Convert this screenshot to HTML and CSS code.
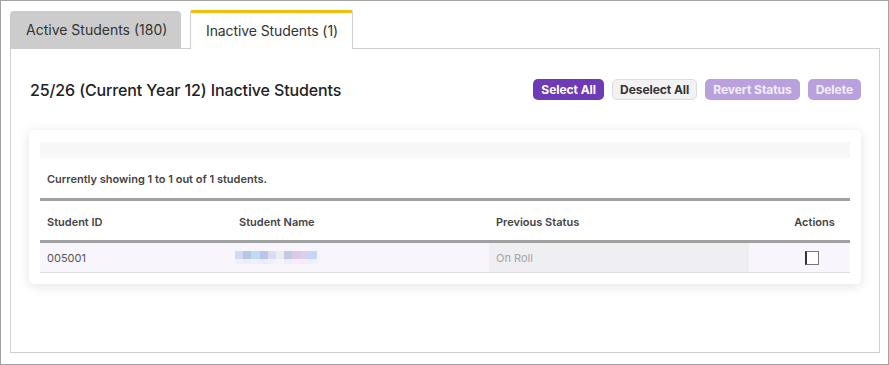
FILE: index.html
```html
<!DOCTYPE html>
<html>
<head>
<meta charset="utf-8">
<link rel="stylesheet" href="styles.css">
</head>
<body>
<div class="frame">
  <div class="tabs">
    <div class="tab">Active Students (180)</div>
    <div class="tab selected">Inactive Students (1)</div>
  </div>
  <div class="panel">
    <div class="header">
      <h1 class="title">25/26 (Current Year 12) Inactive Students</h1>
      <div class="actions">
        <button class="btn primary">Select All</button>
        <button class="btn light">Deselect All</button>
        <button class="btn disabled">Revert Status</button>
        <button class="btn disabled">Delete</button>
      </div>
    </div>
    <div class="card">
      <div class="filterbar"></div>
      <div class="count">Currently showing 1 to 1 out of 1 students.</div>
      <table class="grid">
        <colgroup>
          <col class="c1"><col class="c2"><col class="c3"><col class="c4">
        </colgroup>
        <thead>
          <tr>
            <th>Student ID</th>
            <th>Student Name</th>
            <th>Previous Status</th>
            <th class="act">Actions</th>
          </tr>
        </thead>
        <tbody>
          <tr>
            <td>005001</td>
            <td>
              <div class="blur">
                <div class="px-row top">
                  <span style="background:#d2daf2"></span><span style="background:#b9c4e8"></span><span style="background:#bddcf3"></span><span style="background:#b9c4e6"></span><span style="background:#dcdcf0"></span><span style="background:#ebebf6"></span><span style="background:#c5c8e4"></span><span style="background:#dcc9e5"></span><span style="background:#d6d0ee"></span><span style="background:#c6d5f4"></span>
                </div>
                <div class="px-row bottom">
                  <span style="background:#eef0fa"></span><span style="background:#eaeef9"></span><span style="background:#edf2fa"></span><span style="background:#eaedf8"></span><span style="background:#f1eff9"></span><span style="background:#f5f3fb"></span><span style="background:#eeedf8"></span><span style="background:#f3eef8"></span><span style="background:#f1eefa"></span><span style="background:#eef0fa"></span>
                </div>
              </div>
            </td>
            <td class="status">On Roll</td>
            <td class="act"><span class="check"></span></td>
          </tr>
        </tbody>
      </table>
    </div>
  </div>
</div>
</body>
</html>
```

FILE: styles.css
```css
* { box-sizing: border-box; }
html, body { margin: 0; padding: 0; background: #fff; }
body {
  font-family: Inter, "Noto Sans", "Liberation Sans", sans-serif;
  color: #333;
  width: 889px;
  height: 365px;
  overflow: hidden;
}
.frame {
  width: 889px;
  height: 365px;
  border: 1px solid #a3a3a3;
  padding: 9px 8px 11px 9px;
  display: flex;
  flex-direction: column;
}
.tabs {
  display: flex;
  align-items: flex-end;
  gap: 9px;
  height: 39px;
  margin-bottom: -1px;
  position: relative;
  z-index: 1;
}
.tab {
  height: 38px;
  padding: 0 16px 0 16px;
  width: 171px;
  background: #cccccc;
  border-radius: 4px 4px 0 0;
  font-size: 14px;
  line-height: 38px;
  color: #333;
  white-space: nowrap;
}
.tab.selected {
  width: 163px;
  height: 39px;
  background: #fff;
  border: 1px solid #cfcfcf;
  border-top: 3px solid #f5bd0b;
  border-bottom: none;
  border-radius: 2px 2px 0 0;
  line-height: 36px;
  padding-left: 15px;
  letter-spacing: -0.1px;
}
.panel {
  flex: 1;
  border: 1px solid #cfcfcf;
  padding: 0 18px 0 18px;
}
.header {
  display: flex;
  align-items: center;
  justify-content: space-between;
  height: 80px;
  padding: 0 0 0 1px;
}
.title {
  margin: 0;
  padding-top: 1px;
  font-size: 16px;
  font-weight: 500;
  color: #222;
  letter-spacing: -0.12px;
}
.actions { display: flex; gap: 8px; }
.btn {
  font-family: inherit;
  font-size: 12px;
  font-weight: 700;
  height: 21px;
  padding: 0 7px;
  border-radius: 5px;
  border: 1px solid transparent;
  line-height: 19px;
  white-space: nowrap;
  letter-spacing: -0.05px;
  cursor: pointer;
}
.btn.primary { background: #6d3bb6; color: #fff; }
.btn.light { background: #f2f2f4; color: #333; border-color: #dcdce0; }
.btn.disabled { background: #b9a1de; color: #f3eefb; }

.card {
  background: #fff;
  border-radius: 5px;
  box-shadow: 0 2px 12px rgba(0,0,0,0.12);
  padding: 12px 11px 11px 11px;
  margin-top: 1px;
}
.filterbar { height: 16px; background: #f7f7f7; }
.count {
  font-size: 11px;
  font-weight: 600;
  color: #444;
  padding: 0 7px;
  height: 40px;
  line-height: 43px;
}
.grid {
  width: 810px;
  border-collapse: collapse;
  table-layout: fixed;
  font-size: 11px;
}
.c1 { width: 192px; }
.c2 { width: 257px; }
.c3 { width: 260px; }
.c4 { width: 101px; }
.grid thead th {
  text-align: left;
  font-weight: 600;
  color: #444;
  height: 42px;
  padding: 3px 7px 0 7px;
  border-top: 3px solid #a0a0a0;
  border-bottom: 3px solid #a0a0a0;
}
.grid th.act, .grid td.act { text-align: center; padding-left: 30px; padding-right: 0; }
.grid tbody td {
  height: 31px;
  padding: 0 7px;
  background: #f9f5fd;
  color: #555;
  border-bottom: 1px solid #dcdce0;
  vertical-align: middle;
}
.grid tbody td.status { background: #efeef2; color: #a5a5a5; }
.blur { display: flex; flex-direction: column; margin-left: -4px; width: 82px; }
.px-row { display: flex; }
.px-row span { flex: 1; }
.px-row.top span { height: 8px; }
.px-row.bottom span { height: 5px; }
.check {
  display: inline-block;
  width: 14px;
  height: 14px;
  border: 1px solid #777;
  border-left: 2px solid #333;
  background: #fff;
  vertical-align: middle;
  margin-left: -5px;
}
```
